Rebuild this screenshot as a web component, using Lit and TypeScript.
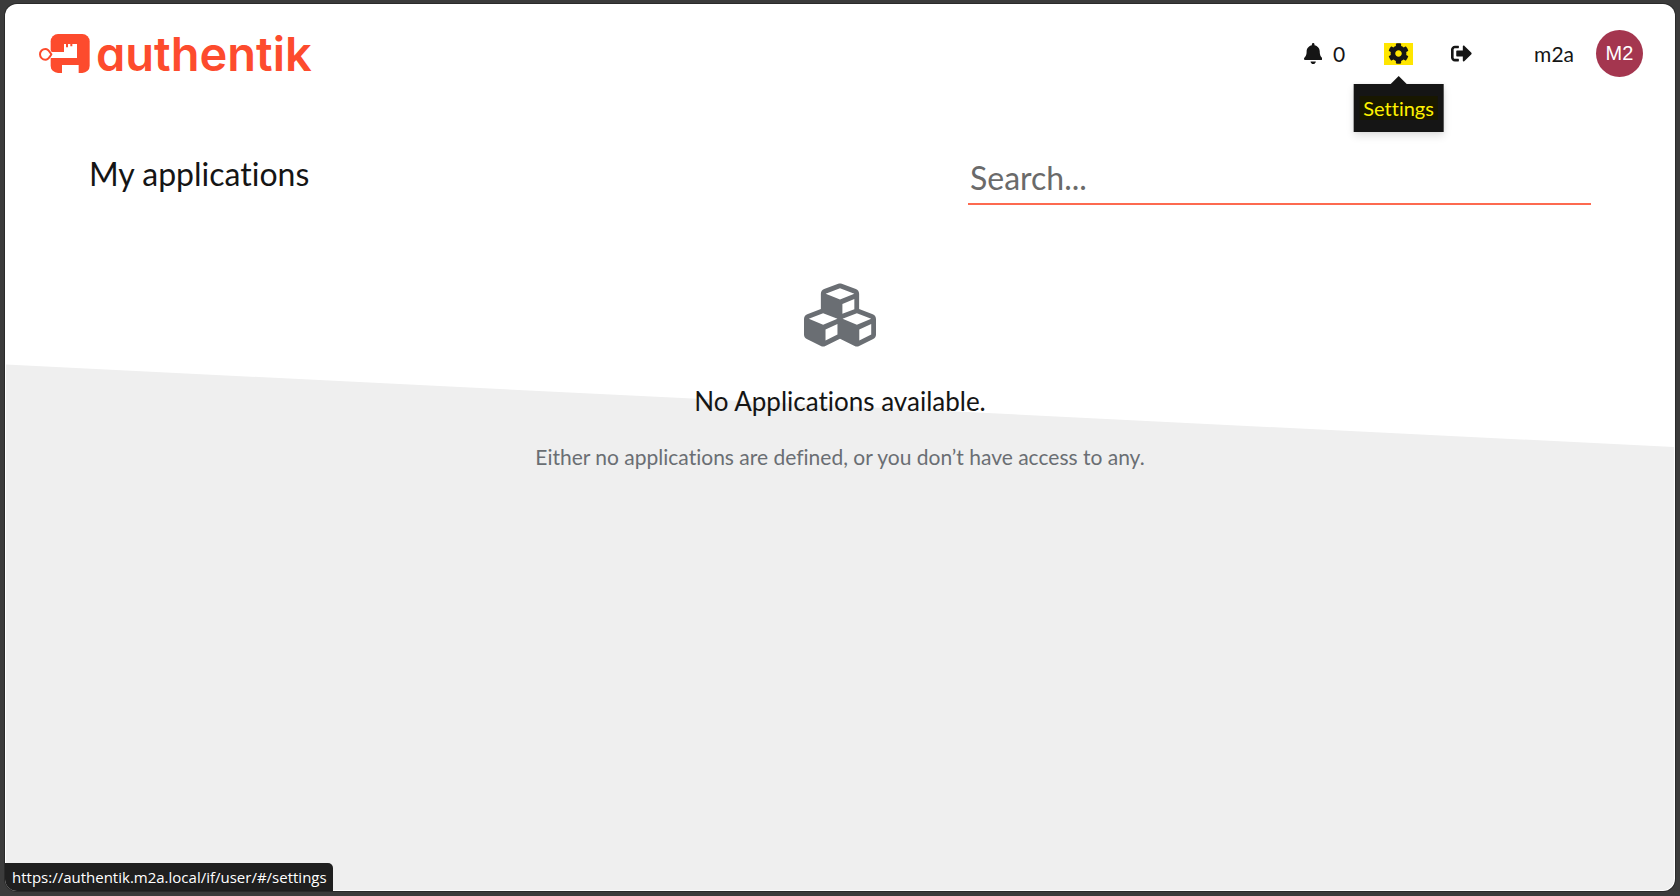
import { LitElement, html, css, svg } from "lit";
import { customElement, property, state } from "lit/decorators.js";

const ICONS = {
  bell: {
    box: "0 0 448 512",
    path: "M224 512c35.32 0 63.97-28.65 63.97-64H160.03c0 35.35 28.65 64 63.97 64zm215.39-149.71c-19.32-20.76-55.47-51.99-55.47-154.29 0-77.7-54.48-139.9-127.94-155.16V32c0-17.67-14.32-32-31.98-32s-31.98 14.33-31.98 32v20.84C118.56 68.1 64.08 130.3 64.08 208c0 102.3-36.15 133.53-55.47 154.29-6 6.45-8.66 14.16-8.61 21.71.11 16.4 12.98 32 32.1 32h383.8c19.12 0 32-15.6 32.1-32 .05-7.55-2.61-15.27-8.61-21.71z",
  },
  cog: {
    box: "0 0 512 512",
    path: "M487.4 315.7l-42.6-24.6c4.3-23.2 4.3-47 0-70.2l42.6-24.6c4.9-2.8 7.1-8.6 5.5-14-11.1-35.6-30-67.8-54.7-94.6-3.8-4.1-10-5.1-14.8-2.3L380.800 110c-17.900-15.400-38.500-27.300-60.800-35.100V25.800c0-5.600-3.900-10.500-9.400-11.700-36.700-8.200-74.300-7.800-109.200 0-5.500 1.200-9.400 6.100-9.400 11.700V75c-22.200 7.900-42.800 19.800-60.800 35.100L88.700 85.500c-4.900-2.800-11-1.900-14.800 2.300-24.700 26.700-43.600 58.900-54.700 94.600-1.700 5.400.6 11.200 5.500 14L67.300 221c-4.300 23.200-4.300 47 0 70.200l-42.600 24.600c-4.900 2.800-7.100 8.600-5.500 14 11.100 35.600 30 67.800 54.700 94.600 3.800 4.100 10 5.100 14.800 2.300l42.600-24.600c17.900 15.400 38.500 27.300 60.800 35.100v49.200c0 5.600 3.900 10.500 9.400 11.700 36.700 8.200 74.300 7.800 109.200 0 5.500-1.200 9.400-6.100 9.400-11.700v-49.200c22.200-7.900 42.800-19.800 60.800-35.100l42.600 24.600c4.900 2.800 11 1.900 14.800-2.300 24.700-26.700 43.600-58.900 54.700-94.600 1.500-5.500-.7-11.300-5.600-14.100zM256 336c-44.100 0-80-35.900-80-80s35.900-80 80-80 80 35.900 80 80-35.900 80-80 80z",
  },
  signOut: {
    box: "0 0 512 512",
    path: "M497 273L329 441c-15 15-41 4.500-41-17v-96H152c-13.300 0-24-10.700-24-24v-96c0-13.300 10.700-24 24-24h136V88c0-21.400 25.900-32 41-17l168 168c9.300 9.400 9.300 24.600 0 34zM192 436v-40c0-6.600-5.400-12-12-12H96c-17.700 0-32-14.300-32-32V160c0-17.700 14.300-32 32-32h84c6.600 0 12-5.400 12-12V76c0-6.600-5.400-12-12-12H96c-53 0-96 43-96 96v192c0 53 43 96 96 96h84c6.600 0 12-5.400 12-12z",
  },
  cubes: {
    box: "0 0 512 512",
    path: "M488.600 250.200L392 214V105.500c0-15-9.300-28.400-23.400-33.700l-100-37.500c-8.100-3.100-17.100-3.100-25.300 0l-100 37.500c-14.100 5.300-23.400 18.700-23.400 33.700V214l-96.600 36.200C9.300 255.500 0 268.900 0 283.900V394c0 13.600 7.700 26.100 19.900 32.200l100 50c10.100 5.100 22.100 5.100 32.200 0l103.900-52 103.900 52c10.100 5.100 22.100 5.100 32.200 0l100-50c12.200-6.100 19.900-18.600 19.900-32.200V283.900c0-15-9.300-28.400-23.400-33.700zM358 214.800l-85 31.900v-68.200l85-37v73.300zM154 104.100l102-38.200 102 38.200v.6l-102 41.400-102-41.400v-.6zm84 291.100l-85 42.500v-79.100l85-38.800v75.400zm0-112l-102 41.400-102-41.400v-.6l102-38.200 102 38.200v.6zm240 112l-85 42.500v-79.100l85-38.800v75.400zm0-112l-102 41.400-102-41.400v-.6l102-38.200 102 38.200v.6z",
  },
};

@customElement("ak-icon")
class AkIcon extends LitElement {
  @property() name: keyof typeof ICONS = "bell";
  static styles = css`
    :host { display: inline-flex; }
    .glyph { display: block; height: 100%; fill: currentColor; }
  `;
  render() {
    const icon = ICONS[this.name];
    return html`<svg class="glyph" viewBox=${icon.box} aria-hidden="true">${svg`<path d=${icon.path} />`}</svg>`;
  }
}

@customElement("ak-brand")
class AkBrand extends LitElement {
  static styles = css`
    :host { display: block; }
    .brand {
      display: flex;
      align-items: center;
      gap: 6px;
      color: #fd4b2d;
      text-decoration: none;
    }
    .mark { width: 51px; height: 39px; flex: none; }
    .word {
      font: 600 47px/48px Inter, sans-serif;
      font-feature-settings: "cv11";
    }
  `;
  render() {
    return html`<a class="brand" href="#/library">
      <svg class="mark" viewBox="0 0 153 117" aria-hidden="true">
        <rect x="35" y="0" width="117" height="117" rx="22" fill="#fd4b2d" />
        <path fill="#fff" d="M34 54H75V30H81V40H87V30H94V37H100V30H114V72H34Z" />
        <path fill="#fff" d="M69 117V93H119V117Z" />
        <path fill="#fff" d="M28 43L45 61L28 79Z" />
        <path fill="#fff" stroke="#fd4b2d" stroke-width="6" d="M19 45C28 45 31 51 37 61C31 71 28 77 19 77A16 16 0 0 1 19 45Z" />
      </svg>
      <span class="word">authentik</span>
    </a>`;
  }
}

@customElement("app-root")
class AppRoot extends LitElement {
  @state() private query = "";
  static styles = css`
    :host {
      display: flex;
      box-sizing: border-box;
      min-height: 100vh;
      padding: 4px 5px 5px;
      background: #3b3b3b;
      font-family: Lato, sans-serif;
      font-variant-ligatures: none;
      color: #151515;
    }
    .page {
      position: relative;
      flex: 1;
      min-width: 0;
      border-radius: 12px;
      background: #fff;
      box-shadow: 0 0 0 1px #2a2a2a;
      overflow: hidden;
    }
    .slope {
      position: absolute;
      inset: 0 1px 1px;
      border-radius: 0 0 11px 11px;
      background: #efefef;
      clip-path: polygon(0 40.7%, 100% 50%, 100% 100%, 0 100%);
    }
    .content { position: relative; }
    .header {
      display: flex;
      align-items: center;
      justify-content: space-between;
      height: 99px;
      padding: 0 32px 0 34px;
    }
    .tools { display: flex; align-items: center; font-size: 21px; line-height: 24px; }
    .tool {
      display: flex;
      align-items: center;
      padding: 0;
      border: 0;
      background: none;
      color: inherit;
      font: inherit;
    }
    .icon { height: 21px; }
    .alerts { gap: 11px; margin-right: 39px; }
    .settings {
      position: relative;
      justify-content: center;
      width: 29px;
      height: 22px;
      margin-right: 38px;
      background: #ffe600;
    }
    .user { margin: 0 22px 0 62px; }
    .avatar {
      display: grid;
      place-items: center;
      width: 47px;
      height: 47px;
      border-radius: 50%;
      background: #a4364f;
      color: #fff;
      font: 500 20px "Liberation Sans", sans-serif;
    }
    .tip {
      position: absolute;
      z-index: 1;
      top: 41px;
      left: 50%;
      transform: translateX(-50%);
      padding: 12px 6px;
      background: #151515;
      box-shadow: 0 4px 8px rgba(3, 3, 3, 0.12), 0 0 4px rgba(3, 3, 3, 0.06);
      color: #fff200;
      font-size: 20px;
      line-height: 24px;
    }
    .tip::before {
      content: "";
      position: absolute;
      left: 50%;
      bottom: 100%;
      margin-left: -8px;
      border: 8px solid transparent;
      border-top: 0;
      border-bottom-color: #151515;
    }
    .mark { display: block; padding: 0 4px; background: #181700; }
    .bar {
      display: grid;
      grid-template-columns: 15fr 10fr;
      padding: 50px 84px 0;
      grid-template-columns: 879fr 623fr;
    }
    .title { margin: 0; font-size: 32px; font-weight: 400; line-height: 42px; }
    .search {
      box-sizing: border-box;
      width: 100%;
      height: 52px;
      padding: 0 2px 2px;
      border: 0;
      border-bottom: 2px solid #fd6a50;
      border-radius: 0;
      background: none;
      outline: none;
      color: #151515;
      font: 32px Lato, sans-serif;
    }
    .search::placeholder { color: #6a6a6a; opacity: 1; }
    .empty {
      display: flex;
      flex-direction: column;
      align-items: center;
      padding: 74px 24px;
      text-align: center;
    }
    .cubes { height: 72px; color: #6a6e73; }
    .lead { margin: 30px 0 0; font-size: 26px; font-weight: 400; line-height: 40px; }
    .hint { margin: 20px 0 0; color: #6a6e73; font-size: 21px; line-height: 32px; }
    .status {
      position: absolute;
      left: 0;
      bottom: 0;
      padding: 4px 6px 4px 7px;
      border-radius: 0 5px 0 0;
      background: #1f1f1f;
      color: #fff;
      font: 15px/20px "Open Sans", sans-serif;
    }
  `;
  render() {
    return html`<div class="page">
      <div class="slope"></div>
      <div class="content">
        <header class="header">
          <ak-brand></ak-brand>
          <nav class="tools">
            <button class="tool alerts" aria-label="Notifications"><ak-icon class="icon" name="bell"></ak-icon><span>0</span></button>
            <a class="tool settings" href="#/settings" aria-describedby="tip">
              <ak-icon class="icon" name="cog"></ak-icon>
              <span class="tip" id="tip" role="tooltip"><span class="mark">Settings</span></span>
            </a>
            <a class="tool" href="#/logout" aria-label="Sign out"><ak-icon class="icon" name="signOut"></ak-icon></a>
            <span class="user">m2a</span>
            <span class="avatar">M2</span>
          </nav>
        </header>
        <main>
          <div class="bar">
            <h1 class="title">My applications</h1>
            <input class="search" type="search" aria-label="Search" placeholder="Search..."
              .value=${this.query} @input=${(e: Event) => (this.query = (e.target as HTMLInputElement).value)} />
          </div>
          <section class="empty">
            <ak-icon class="cubes" name="cubes"></ak-icon>
            <h2 class="lead">No Applications available.</h2>
            <p class="hint">Either no applications are defined, or you don’t have access to any.</p>
          </section>
        </main>
      </div>
      <div class="status">https://authentik.m2a.local/if/user/#/settings</div>
    </div>`;
  }
}
